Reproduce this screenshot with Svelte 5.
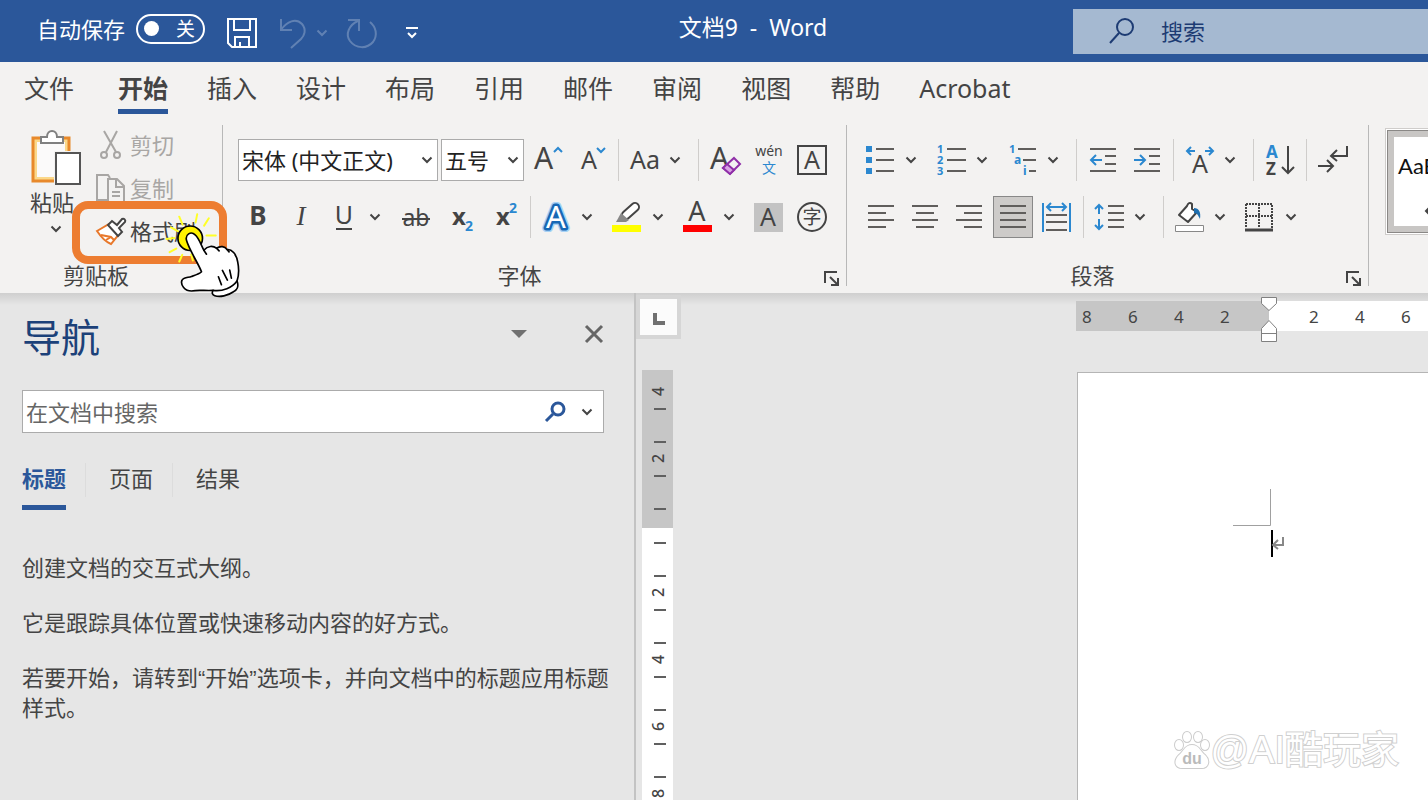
<script lang="ts">
	let autosave = $state(false);
	let activeTab = $state('开始');
	let activePane = $state('标题');
	let query = $state('');

	const tabs = ['开始', '插入', '设计', '布局', '引用', '邮件', '审阅', '视图', '帮助', 'Acrobat'];
	const panes = ['标题', '页面', '结果'];

	type Tool = { icon: string; label: string; menu?: boolean; on?: boolean } | null;

	// null draws a separator
	const fontTop: Tool[] = [
		{ icon: 'grow', label: '增大字号' },
		{ icon: 'shrink', label: '减小字号' },
		null,
		{ icon: 'case', label: '更改大小写', menu: true },
		null,
		{ icon: 'clear', label: '清除所有格式' },
		{ icon: 'pinyin', label: '拼音指南' },
		{ icon: 'charBorder', label: '字符边框' }
	];
	const fontBottom: Tool[] = [
		{ icon: 'bold', label: '加粗' },
		{ icon: 'italic', label: '倾斜' },
		{ icon: 'underline', label: '下划线', menu: true },
		{ icon: 'strike', label: '删除线' },
		{ icon: 'sub', label: '下标' },
		{ icon: 'sup', label: '上标' },
		null,
		{ icon: 'effects', label: '文本效果', menu: true },
		{ icon: 'highlight', label: '突出显示', menu: true },
		{ icon: 'color', label: '字体颜色', menu: true },
		{ icon: 'shade', label: '字符底纹' },
		{ icon: 'enclose', label: '带圈字符' }
	];
	const paraTop: Tool[] = [
		{ icon: 'bullets', label: '项目符号', menu: true },
		{ icon: 'numbers', label: '编号', menu: true },
		{ icon: 'levels', label: '多级列表', menu: true },
		null,
		{ icon: 'outdent', label: '减少缩进量' },
		{ icon: 'indent', label: '增加缩进量' },
		null,
		{ icon: 'scale', label: '中文版式', menu: true },
		null,
		{ icon: 'sort', label: '排序' },
		null,
		{ icon: 'marks', label: '显示编辑标记' }
	];
	const paraBottom: Tool[] = [
		{ icon: 'left', label: '左对齐' },
		{ icon: 'center', label: '居中' },
		{ icon: 'right', label: '右对齐' },
		{ icon: 'justify', label: '两端对齐', on: true },
		{ icon: 'distribute', label: '分散对齐' },
		null,
		{ icon: 'spacing', label: '行距', menu: true },
		null,
		{ icon: 'fill', label: '底纹', menu: true },
		{ icon: 'borders', label: '边框', menu: true }
	];
</script>

{#snippet chevron()}
	<svg class="chevron" viewBox="0 0 12 8" aria-hidden="true"><path d="M1.5 1.5 6 6l4.5-4.5" /></svg>
{/snippet}

{#snippet launcher(label: string)}
	<button class="launcher" aria-label={label}>
		<svg width="18" height="18" viewBox="0 0 18 18"><path d="M2 13V2h12M7 7l8 8M15 8v7H8" /></svg>
	</button>
{/snippet}

{#snippet icon(name: string)}
	<svg class="icon" viewBox="0 0 32 32" aria-hidden="true">
		{#if name === 'grow'}
			<text x="2" y="25" font-size="30">A</text>
			<path class="blue" d="m22 8 4-4 4 4" />
		{:else if name === 'shrink'}
			<text x="5" y="25" font-size="25">A</text>
			<path class="blue" d="m21 4 4 4 4-4" />
		{:else if name === 'case'}
			<text x="1" y="25" font-size="25">Aa</text>
		{:else if name === 'clear'}
			<text x="1" y="25" font-size="30">A</text>
			<path d="m25 14 6 6-10 10-7-6z" fill="#f3f2f1" stroke="#8f2fa8" />
			<path d="m18 20 7 6-4 4-7-6z" fill="#d9a3e4" stroke="#8f2fa8" />
		{:else if name === 'pinyin'}
			<text x="16" y="12" font-size="14" text-anchor="middle">wén</text>
			<text class="blue" x="16" y="29" font-size="14" text-anchor="middle">文</text>
		{:else if name === 'charBorder'}
			<rect x="1" y="2" width="28" height="28" fill="none" />
			<text x="15" y="25" font-size="25" text-anchor="middle">A</text>
		{:else if name === 'bold'}
			<text x="17" y="24" font-size="26" font-weight="700" text-anchor="middle">B</text>
		{:else if name === 'italic'}
			<text class="serif" x="16" y="24" font-size="27" text-anchor="middle">I</text>
		{:else if name === 'underline'}
			<text x="15" y="23" font-size="25" text-anchor="middle">U</text>
			<path d="M7 28h16" />
		{:else if name === 'strike'}
			<text x="16" y="25" font-size="23" text-anchor="middle">ab</text>
			<path d="M2 18h28" />
		{:else if name === 'sub'}
			<text x="8" y="24" font-size="24" font-weight="700">x</text>
			<text class="blue" x="21" y="30" font-size="14" font-weight="700">2</text>
		{:else if name === 'sup'}
			<text x="8" y="24" font-size="24" font-weight="700">x</text>
			<text class="blue" x="21" y="12" font-size="14" font-weight="700">2</text>
		{:else if name === 'effects'}
			<text class="glow" x="15" y="27" font-size="31" text-anchor="middle">A</text>
			<text class="rim" x="15" y="27" font-size="31" text-anchor="middle">A</text>
		{:else if name === 'highlight'}
			<path d="m14 14 9-8" stroke-width="10" stroke-linecap="round" />
			<path d="m14 14 9-8" stroke="#fff" stroke-width="6" stroke-linecap="round" />
			<path d="m4 21 5-9 8 7-3 2z" fill="#888" stroke="none" />
			<path d="M0 24h29v7H0z" fill="#ff0" stroke="none" />
		{:else if name === 'color'}
			<text x="14" y="20" font-size="27" text-anchor="middle">A</text>
			<path d="M0 24h29v7H0z" fill="#f00" stroke="none" />
		{:else if name === 'shade'}
			<path d="M0 2h29v29H0z" fill="#c3c3c3" stroke="none" />
			<text x="14" y="25" font-size="25" text-anchor="middle">A</text>
		{:else if name === 'enclose'}
			<circle cx="14" cy="16" r="14" fill="none" />
			<text x="14" y="23" font-size="19" text-anchor="middle">字</text>
		{:else if name === 'bullets'}
			<path d="M1 2h6v6H1zM1 13h6v6H1zM1 24h6v6H1z" fill="#2b88d0" stroke="none" />
			<path class="rule" d="M11 5h18M11 16h18M11 27h18" />
		{:else if name === 'numbers'}
			<text class="blue" x="1" y="9" font-size="11" font-weight="700">1</text>
			<text class="blue" x="1" y="20" font-size="11" font-weight="700">2</text>
			<text class="blue" x="1" y="31" font-size="11" font-weight="700">3</text>
			<path class="rule" d="M11 5h19M11 16h19M11 27h19" />
		{:else if name === 'levels'}
			<text class="blue" x="2" y="9" font-size="11" font-weight="700">1</text>
			<text class="blue" x="7" y="20" font-size="12" font-weight="700">a</text>
			<text class="blue" x="16" y="31" font-size="12" font-weight="700">i</text>
			<path class="rule" d="M11 5h18M16 16h13M22 27h7" />
		{:else if name === 'outdent'}
			<path class="rule" d="M3 5h26M18 12h11M18 20h11M3 27h26" />
			<path class="blue" d="M15 16H4m5-5-5 5 5 5" />
		{:else if name === 'indent'}
			<path class="rule" d="M3 5h26M18 12h11M18 20h11M3 27h26" />
			<path class="blue" d="M3 16h11m-5-5 5 5-5 5" />
		{:else if name === 'scale'}
			<text x="16" y="29" font-size="25" text-anchor="middle">A</text>
			<path class="blue" d="M11 7H3m4-4L3 7l4 4M21 7h8m-4-4 4 4-4 4" />
		{:else if name === 'sort'}
			<text class="blue" x="2" y="14" font-size="17" font-weight="700">A</text>
			<text x="2" y="31" font-size="17" font-weight="700">Z</text>
			<path d="M24 2v27m-6-6 6 6 6-6" />
		{:else if name === 'marks'}
			<path d="M1 22h14m-5-6 6 6-6 6M30 2v10H15m5-6-6 6 6 5" />
		{:else if name === 'left'}
			<path class="rule" d="M3 5h26M3 12h18M3 19h26M3 26h18" />
		{:else if name === 'center'}
			<path class="rule" d="M3 5h26M7 12h18M3 19h26M7 26h18" />
		{:else if name === 'right'}
			<path class="rule" d="M3 5h26M11 12h18M3 19h26M11 26h18" />
		{:else if name === 'justify'}
			<path class="rule" d="M3 5h26M3 12h26M3 19h26M3 26h26" />
		{:else if name === 'distribute'}
			<path class="rule" d="M5 14h21M5 21h21M5 29h21" />
			<path class="blue" d="M2 2v29M29 2v29M6 6h19m-15-4L6 6l4 4M21 2l4 4-4 4" />
		{:else if name === 'spacing'}
			<path class="rule" d="M14 5h16M14 12h16M14 19h16M14 26h16" />
			<path class="blue" d="M5 13V4M1 8l4-4 4 4M5 18v10m-4-4 4 4 4-4" />
		{:else if name === 'fill'}
			<path d="M13 5 5 14l9 7 9-10-5-3V3c-2-2-4-1-5 2z" fill="#fff" stroke-linejoin="round" />
			<path d="M20 7c5 0 7 4 6 11-2-4-3-6-6-6z" fill="#1e6fb0" stroke="none" />
			<path d="M1.5 24.5h28v6h-28z" fill="#fff" stroke="#888" stroke-width="1" />
		{:else if name === 'borders'}
			<path d="M1 3h26v24M1 3v24M1 15h26M14 3v24" fill="none" stroke-dasharray="2 1" />
			<path d="M0 29h28" stroke-width="3" />
		{/if}
	</svg>
{/snippet}

{#snippet tools(list: Tool[])}
	{#each list as tool}
		{#if tool}
			<button class="tool" class:menu={tool.menu} class:on={tool.on} aria-label={tool.label}>
				{@render icon(tool.icon)}
				{#if tool.menu}{@render chevron()}{/if}
			</button>
		{:else}
			<span class="sep"></span>
		{/if}
	{/each}
{/snippet}

<div class="app">
	<header class="titlebar">
		<div class="quick">
			<label class="autosave">
				自动保存
				<input type="checkbox" bind:checked={autosave} />
				<span class="switch"><i></i>{autosave ? '开' : '关'}</span>
			</label>
			<button class="save" aria-label="保存">
				<svg width="32" height="32" viewBox="0 0 32 32"><path d="M2 2h28v28H6l-4-4zM8 2v11h16V2M9 30V20h14v10M14 30v-5" /></svg>
			</button>
			<button class="undo faded" aria-label="撤消">
				<svg width="30" height="32" viewBox="0 0 30 32"><path d="M3 2v11h11M3 13C9 4 18 1 24 7c5 6 2 12-1 15l-10 9" /></svg>
				{@render chevron()}
			</button>
			<button class="redo faded" aria-label="重复">
				<svg width="34" height="34" viewBox="0 0 34 34"><path d="M3 4h11v11M13 5C4 9 0 18 5 25c6 8 17 8 23 1 5-7 3-15-3-20" /></svg>
			</button>
			<button aria-label="自定义快速访问工具栏">
				<svg width="14" height="14" viewBox="0 0 14 14"><path d="M1 2h12M3 7l4 4 4-4" /></svg>
			</button>
		</div>
		<h1>文档9 &nbsp;-&nbsp; Word</h1>
		<label class="search">
			<svg width="28" height="28" viewBox="0 0 28 28" aria-hidden="true"><circle cx="17" cy="10" r="8" /><path d="M11 16 2 26" /></svg>
			<input type="text" placeholder="搜索" aria-label="搜索" />
		</label>
	</header>

	<section class="ribbon">
		<nav class="tabs">
			<button class="tab file">文件</button>
			{#each tabs as tab}
				<button class="tab" class:active={activeTab === tab} onclick={() => (activeTab = tab)}>{tab}</button>
			{/each}
		</nav>

		<div class="groups">
			<div class="group clipboard">
				<div class="clip-body">
					<button class="paste">
						<svg width="52" height="58" viewBox="0 0 52 58" aria-hidden="true">
							<path d="M3 9h36v43H3z" fill="#fbd88a" stroke="#e8892b" stroke-width="3" />
							<path d="M7 13h28v35H7z" fill="#fbfafa" stroke="none" />
							<path d="M11 14V8h6c0-8 10-8 10 0h6v6z" fill="#fff" stroke="#808080" />
							<path d="M24 22h27v34H24z" fill="#f3f2f1" stroke="none" />
							<path d="M26 24h24v31H26z" fill="#fff" stroke="#555" />
						</svg>
						<span>粘贴</span>
						{@render chevron()}
					</button>
					<div class="clip-list">
						<button class="off">
							<svg width="30" height="30" viewBox="0 0 30 30" aria-hidden="true"><path d="m8 1 12 21M21 1 10 22" /><circle cx="8" cy="25" r="3" /><circle cx="21" cy="25" r="3" /></svg>
							剪切
						</button>
						<button class="off">
							<svg width="30" height="30" viewBox="0 0 30 30" aria-hidden="true"><path d="M12 27H1V2h11l2 3M12 6h9l7 7v16H12zM20 6v8h8M16 19h8M16 23h8" /></svg>
							复制
						</button>
						<button>
							<svg width="30" height="30" viewBox="0 0 30 30" aria-hidden="true">
								<path d="m1 15 12-7 10 10-8 10C10 26 5 21 1 15z" fill="#fff" stroke="#e8782b" />
								<path d="m5 19 10 2 3 3M10 24l5-3" stroke="#e8782b" />
								<path d="m12 9 4-4 5 4 5-6c2-1 4 1 3 3l-6 6 3 4-4 4z" fill="#fff" />
							</svg>
							格式刷
						</button>
					</div>
				</div>
				<div class="group-label"><span>剪贴板</span></div>
			</div>

			<div class="group font">
				<div class="row pickers">
					<label class="picker family">
						<select aria-label="字体"><option>宋体 (中文正文)</option></select>
						{@render chevron()}
					</label>
					<label class="picker size">
						<select aria-label="字号"><option>五号</option></select>
						{@render chevron()}
					</label>
					{@render tools(fontTop)}
				</div>
				<div class="row">{@render tools(fontBottom)}</div>
				<div class="group-label"><span>字体</span>{@render launcher('字体设置')}</div>
			</div>

			<div class="group paragraph">
				<div class="row">{@render tools(paraTop)}</div>
				<div class="row">{@render tools(paraBottom)}</div>
				<div class="group-label"><span>段落</span>{@render launcher('段落设置')}</div>
			</div>

			<div class="gallery">
				<button class="style" aria-label="正文">
					<span>AaBbCcDd</span>
					<svg width="14" height="14" viewBox="0 0 14 14"><path d="M13 1v6H1m4-4L1 7l4 4" /></svg>
				</button>
			</div>
		</div>

		<div class="callout"></div>
		<svg class="hand" viewBox="480 270 250 280" aria-hidden="true">
			<g stroke="#ffff28" stroke-width="6" stroke-linecap="round">
				<path d="m538 290 10 24M592 283l-5 25M627 295l-14 22M620 347h28M513 322l22 12M499 357l24-3M509 397l20-11M538 425l9-20M579 422l-5-18" />
			</g>
			<circle cx="571" cy="355" r="37" fill="#fff200" stroke="#000" stroke-width="5" />
			<path d="M560 362c-5-18 13-30 26-17 10 8 17 28 26 46 12-14 28-14 38-6 12-8 25-6 32 4 14-2 28 14 32 37 5 24 3 43-2 58 6 16 0 28-12 33-15 11-40 16-55 11-7-2-10-8-5-16-24 2-44-3-65 2-20 0-34-18-29-32 6-10 19-8 29-12 15-5 25-8 30-14-10-26-37-66-45-94z" fill="#fff" stroke="#000" stroke-width="5" stroke-linejoin="round" />
			<path d="M640 512c28 4 58-8 72-28M656 471l9 24M668 452l15 29M690 451l5 24M612 391l8 12M650 385l8 8M682 389l6 7" fill="none" stroke="#000" stroke-width="5" stroke-linecap="round" />
		</svg>
	</section>

	<main>
		<aside class="navigation">
			<div class="nav-head">
				<h2>导航</h2>
				<button aria-label="任务窗格选项"><svg width="18" height="10" viewBox="0 0 18 10"><path d="M1 1h16L9 9z" fill="#707070" stroke="none" /></svg></button>
				<button aria-label="关闭"><svg width="20" height="20" viewBox="0 0 20 20"><path d="m2 2 16 16M18 2 2 18" stroke="#666" stroke-width="3" /></svg></button>
			</div>
			<div class="nav-search">
				<input type="text" placeholder="在文档中搜索" aria-label="在文档中搜索" bind:value={query} />
				<button aria-label="搜索"><svg width="22" height="22" viewBox="0 0 22 22"><circle cx="14" cy="8" r="6" stroke="#2b579a" stroke-width="3" /><path d="m9 13-7 7" stroke="#2b579a" stroke-width="3" /></svg></button>
				<button aria-label="搜索选项">{@render chevron()}</button>
			</div>
			<div class="nav-tabs" role="tablist">
				{#each panes as pane}
					<button role="tab" aria-selected={activePane === pane} class:active={activePane === pane} onclick={() => (activePane = pane)}>{pane}</button>
				{/each}
			</div>
			<p>创建文档的交互式大纲。</p>
			<p>它是跟踪具体位置或快速移动内容的好方式。</p>
			<p>若要开始，请转到“开始”选项卡，并向文档中的标题应用标题样式。</p>
		</aside>

		<div class="left-rail">
			<button class="tab-stop" aria-label="制表符"><svg width="12" height="12" viewBox="0 0 12 12"><path d="M2 0v10h10" stroke-width="4" /></svg></button>
			<div class="vruler">
				<div class="vmargin">
					{#each [4, 2] as n}
						<div class="unit"><b>{n}</b><i></i><s></s><i></i></div>
					{/each}
				</div>
				<div class="vbody">
					<div class="unit first"><i></i><s></s><i></i></div>
					{#each [2, 4, 6, 8] as n}
						<div class="unit"><b>{n}</b><i></i><s></s><i></i></div>
					{/each}
				</div>
			</div>
		</div>

		<div class="canvas">
			<div class="hruler">
				<div class="hmargin">{#each [8, 6, 4, 2] as n}<span>{n}</span>{/each}</div>
				<div class="hbody">
					{#each [2, 4, 6] as n}<span>{n}</span>{/each}
					<svg class="indent-marker" width="18" height="48" viewBox="0 0 18 48" aria-hidden="true">
						<path d="M1.5 1.5h15v6L9 14.5l-7.5-7zM9 24.5l7.5 8v13h-15v-13zM1.5 37.5h15" />
					</svg>
				</div>
			</div>
			<div class="page">
				<svg width="54" height="70" viewBox="0 0 54 70" aria-hidden="true">
					<path d="M37.5 0v36.5H0" stroke="#a0a0a0" stroke-width="1" />
					<path d="M39 41v27" stroke="#000" />
					<path d="M50 48v8H41m4-5-5 5 5 4" stroke="#888" />
				</svg>
			</div>
		</div>
	</main>

	<div class="watermark">
		<svg width="38" height="40" viewBox="0 0 38 40" aria-hidden="true">
			<g fill="#fff" stroke="#ccc">
				<ellipse cx="6" cy="15" rx="4" ry="5" />
				<ellipse cx="14" cy="7" rx="4" ry="5" />
				<ellipse cx="25" cy="7" rx="4" ry="5" />
				<ellipse cx="32" cy="15" rx="4" ry="5" />
				<path d="M19 15c7 0 8 6 13 10 6 6 3 13-3 13H9c-7 0-9-7-3-13 5-4 6-10 13-10z" />
			</g>
			<text x="19" y="34" font-size="16" font-weight="700" text-anchor="middle">du</text>
		</svg>
		<span>@AI酷玩家</span>
	</div>
</div>

<style>
	:global(body) {
		margin: 0;
	}
	.app {
		position: relative;
		display: flex;
		flex-direction: column;
		height: 100vh;
		overflow: hidden;
		background: #e6e6e6;
		color: #444;
		font: 22px/30px 'Noto Sans', 'Noto Sans CJK SC', sans-serif;
	}
	button,
	input,
	select {
		margin: 0;
		padding: 0;
		border: 0;
		background: none;
		color: inherit;
		font: inherit;
	}
	button {
		display: flex;
		align-items: center;
		justify-content: center;
	}
	svg {
		flex: none;
		overflow: visible;
		fill: none;
		stroke: #444;
		stroke-width: 2;
	}
	svg text {
		fill: #444;
		stroke: none;
	}
	.chevron {
		width: 12px;
		height: 8px;
	}

	/* title bar */
	.titlebar {
		display: flex;
		align-items: center;
		flex: none;
		height: 62px;
		background: #2b579a;
		color: #fff;
	}
	.titlebar svg {
		stroke: #fff;
	}
	.quick {
		display: flex;
		align-items: center;
		box-sizing: border-box;
		width: 433px;
		padding: 3px 0 0 37px;
	}
	.autosave {
		display: flex;
		align-items: center;
		gap: 11px;
		margin: 0 21px 8px 0;
	}
	.autosave input {
		position: absolute;
		opacity: 0;
	}
	.switch {
		display: flex;
		align-items: center;
		justify-content: space-between;
		box-sizing: border-box;
		width: 69px;
		height: 30px;
		padding: 0 8px 0 6px;
		border: 2px solid #fff;
		border-radius: 15px;
		font-size: 19px;
	}
	.switch i {
		width: 15px;
		height: 15px;
		border-radius: 50%;
		background: #fff;
	}
	.save {
		margin-right: 20px;
	}
	.undo {
		gap: 8px;
		margin-right: 17px;
	}
	.redo {
		margin-right: 26px;
	}
	.faded {
		opacity: 0.25;
	}
	h1 {
		flex: 1;
		margin: 0 0 8px;
		font-size: 23px;
		font-weight: 400;
		text-align: center;
	}
	.search {
		display: flex;
		align-items: center;
		gap: 25px;
		box-sizing: border-box;
		width: 355px;
		height: 45px;
		padding-left: 35px;
		background: #a5b9d1;
	}
	.search svg {
		stroke: #1d3b73;
	}
	.search input {
		width: 200px;
	}
	.search input::placeholder {
		color: #1d3b73;
		opacity: 1;
	}

	/* ribbon */
	.ribbon {
		position: relative;
		flex: none;
		height: 231px;
		background: #f3f2f1;
	}
	.tabs {
		display: flex;
		gap: 39px;
		height: 63px;
		padding-left: 24px;
	}
	.tab {
		align-items: flex-start;
		box-sizing: border-box;
		height: 52px;
		padding-top: 11px;
		border-bottom: 5px solid transparent;
		font-size: 25px;
	}
	.file {
		margin-right: 5px;
	}
	.tab.active {
		border-color: #2b579a;
		font-weight: 700;
	}
	.groups {
		display: flex;
		height: 161px;
	}
	.group {
		display: flex;
		flex: none;
		flex-direction: column;
		box-sizing: border-box;
		border-right: 1px solid #b8b8b8;
	}
	.clipboard {
		width: 223px;
	}
	.font {
		width: 624px;
		padding-top: 14px;
	}
	.paragraph {
		width: 522px;
		padding-top: 14px;
	}
	.row {
		display: flex;
		height: 42px;
		margin-bottom: 15px;
		padding-left: 12px;
	}
	.pickers {
		padding-left: 15px;
	}
	.group-label {
		display: flex;
		align-items: center;
		height: 22px;
		margin-top: auto;
	}
	.group-label span {
		flex: 1;
		padding-right: 30px;
		text-align: center;
	}
	.group-label span:not(:last-child) {
		padding-right: 0;
	}
	.launcher {
		width: 28px;
		margin-left: 2px;
		padding-top: 8px;
	}
	.clip-body {
		display: flex;
	}
	.paste {
		flex-direction: column;
		justify-content: flex-start;
		width: 54px;
		margin: 4px 13px 0 29px;
	}
	.paste span {
		width: 52px;
		text-align: left;
	}
	.paste .chevron {
		margin-top: 8px;
	}
	.clip-list button {
		gap: 4px;
		box-sizing: border-box;
		height: 43px;
		padding-bottom: 3px;
	}
	.clip-list .off {
		color: #a8a6a4;
	}
	.off svg {
		stroke: #a8a6a4;
	}
	.picker {
		display: flex;
		align-items: center;
		box-sizing: border-box;
		padding-right: 4px;
		border: 1px solid #ababab;
		background: #fff;
		color: #222;
	}
	.picker select {
		flex: 1;
		min-width: 0;
		padding-left: 3px;
		appearance: none;
		outline: 0;
	}
	.family {
		width: 200px;
		margin-right: 3px;
	}
	.size {
		width: 83px;
		margin-right: 2px;
	}
	.tool {
		justify-content: flex-start;
		box-sizing: border-box;
		width: 44px;
		padding-left: 6px;
	}
	.tool.menu {
		width: 71px;
		gap: 8px;
	}
	.tool.on {
		width: 40px;
		margin: 0 2px;
		padding-left: 3px;
		border: 1px solid #888;
		background: #cdcbc9;
	}
	.icon {
		width: 32px;
		height: 32px;
	}
	.icon .rule {
		stroke: #605e5c;
	}
	.icon path.blue {
		stroke: #2b88d0;
	}
	.icon text.blue {
		fill: #2b88d0;
	}
	.icon .serif {
		font-family: 'Liberation Serif', serif;
		font-style: italic;
	}
	.icon .glow {
		stroke: #a6d2f5;
		stroke-width: 8;
		stroke-linejoin: round;
	}
	.icon .rim {
		fill: #fff;
		stroke: #1668b5;
		stroke-width: 5;
		stroke-linejoin: round;
		paint-order: stroke;
	}
	.sep {
		width: 1px;
		margin: 0 4px;
		background: #cfcdcb;
	}
	.gallery {
		flex: 1;
		min-width: 0;
		padding: 3px 0 0 16px;
		overflow: hidden;
	}
	.style {
		flex-direction: column;
		align-items: flex-start;
		justify-content: flex-start;
		box-sizing: border-box;
		width: 110px;
		height: 107px;
		padding: 21px 0 0 4px;
		gap: 23px;
		border: 2px solid #fff;
		outline: 1px solid #cfcdcb;
		outline-offset: -1px;
		background: #fff;
		box-shadow:
			inset 0 0 0 1px #8a8886,
			inset 0 0 0 7px #c8c6c4;
		color: #111;
		font-family: Lato, sans-serif;
	}
	.style span {
		margin-left: 7px;
	}
	.style svg {
		margin-left: 34px;
	}
	/* highlight ring and pointer over the format painter */
	.callout {
		position: absolute;
		left: 72px;
		top: 139px;
		box-sizing: border-box;
		width: 155px;
		height: 63px;
		border: 8px solid #ed7d31;
		border-radius: 16px;
	}
	.hand {
		position: absolute;
		z-index: 1;
		left: 160px;
		top: 148px;
		width: 83px;
		height: 93px;
	}

	/* workspace */
	main {
		display: flex;
		flex: 1;
		min-height: 0;
		background: linear-gradient(#cfcfcf, #d8d8d8 5px, #e6e6e6 12px);
	}
	.navigation {
		flex: none;
		box-sizing: border-box;
		width: 636px;
		padding: 19px 22px 0;
		border-right: 2px solid #c3c3c3;
	}
	.nav-head {
		display: flex;
		align-items: center;
		gap: 56px;
		height: 44px;
	}
	.nav-head button:last-child {
		margin-right: 8px;
	}
	h2 {
		flex: 1;
		margin: 0;
		padding-top: 6px;
		color: #1c4179;
		font-size: 39px;
		font-weight: 400;
		line-height: 50px;
	}
	.nav-search {
		display: flex;
		align-items: center;
		box-sizing: border-box;
		height: 43px;
		margin: 34px 8px 0 0;
		border: 1px solid #ababab;
		background: #fff;
	}
	.nav-search input {
		flex: 1;
		padding-left: 3px;
	}
	.nav-search input::placeholder {
		color: #666;
		opacity: 1;
	}
	.nav-search button {
		width: 32px;
	}
	.nav-tabs {
		display: flex;
		gap: 43px;
		margin: 30px 0 44px;
	}
	.nav-tabs button {
		position: relative;
		height: 47px;
		box-sizing: border-box;
		border-bottom: 5px solid transparent;
		padding-bottom: 12px;
	}
	.nav-tabs button:not(:last-child)::after {
		content: '';
		position: absolute;
		top: 0;
		right: -20px;
		width: 1px;
		height: 34px;
		background: #dcdcdc;
	}
	.nav-tabs .active {
		border-color: #2b579a;
		color: #2b579a;
		font-weight: 700;
	}
	p {
		margin: 0 0 25px;
		font-family: 'Liberation Sans', 'Noto Sans CJK SC', sans-serif;
	}
	.left-rail {
		flex: none;
		width: 45px;
	}
	.tab-stop {
		box-sizing: border-box;
		width: 45px;
		height: 44px;
		margin-top: 2px;
		padding-top: 4px;
		border: 4px solid #d6d6d6;
		background: #fbfbfb;
	}
	.tab-stop svg {
		stroke: #707070;
	}
	.vruler {
		width: 31px;
		margin: 31px 0 0 6px;
		font-size: 16px;
		line-height: 17px;
	}
	.vmargin {
		height: 145px;
		padding-top: 13px;
		background: #c6c6c6;
	}
	.vbody {
		padding-top: 6px;
		background: #fff;
	}
	.unit {
		display: grid;
		grid-template-rows: 17px 17px 17px 16px;
		place-items: center;
	}
	.unit.first {
		grid-template-rows: 17px 17px 16px;
	}
	.unit b {
		margin-left: 2px;
		font-weight: 500;
		transform: rotate(-90deg);
	}
	.unit i {
		width: 12px;
		height: 2px;
		margin-left: 4px;
		background: #606060;
	}
	.canvas {
		display: flex;
		flex: 1;
		flex-direction: column;
		min-width: 0;
		margin-left: 395px;
	}
	.hruler {
		display: flex;
		flex: none;
		height: 30px;
		margin: 8px 0 41px;
		font-size: 17px;
		line-height: 32px;
	}
	.hruler span {
		flex: none;
		width: 46px;
	}
	.hmargin {
		display: flex;
		box-sizing: border-box;
		width: 193px;
		padding-left: 6px;
		background: #c6c6c6;
	}
	.hbody {
		position: relative;
		display: flex;
		flex: 1;
		min-width: 0;
		padding-left: 40px;
		background: #fff;
	}
	.indent-marker {
		position: absolute;
		left: -9px;
		top: -5px;
		fill: #fff;
		stroke: #808080;
		stroke-width: 1;
	}
	.page {
		flex: 1;
		margin-left: 1px;
		padding: 116px 0 0 155px;
		border: 1px solid #b5b5b5;
		border-width: 1px 0 0 1px;
		background: #fff;
	}

	.watermark {
		position: absolute;
		right: 29px;
		bottom: 28px;
		display: flex;
		align-items: center;
		height: 44px;
		color: #fff;
		font-family: 'Liberation Sans', 'Noto Sans CJK SC', sans-serif;
		font-size: 38px;
		-webkit-text-stroke: 2px #d0d0d0;
		paint-order: stroke;
	}
	.watermark text {
		fill: #bbb;
		-webkit-text-stroke: 0;
	}
</style>
